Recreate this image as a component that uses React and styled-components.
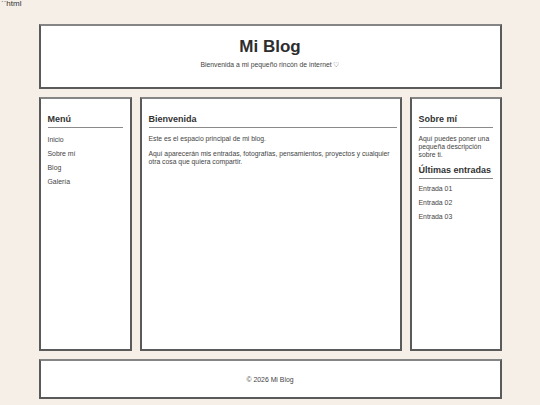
import React from 'react'
import styled, { createGlobalStyle } from 'styled-components'

const GlobalStyle = createGlobalStyle`
  html, body {
    margin: 0;
    padding: 0;
    background: #f5efe8;
    font-family: "Liberation Sans", Arial, sans-serif;
    color: #333;
    -webkit-font-smoothing: antialiased;
  }
`

const Stray = styled.div`
  font-size: 8px;
  line-height: 10px;
  height: 10px;
  color: #333;
  padding-left: 1px;
  margin-top: -1px;
`

const Page = styled.div`
  width: 463px;
  margin: 15px auto 0;
  display: flex;
  flex-direction: column;
  gap: 8px;
`

const Box = styled.div`
  background: #fff;
  border: 2px solid #5a5a5a;
  border-top-color: #858585;
  box-sizing: border-box;
`

const Header = styled(Box)`
  height: 65px;
  display: flex;
  flex-direction: column;
  align-items: center;
  padding-top: 10px;
`

const Title = styled.h1`
  margin: 0;
  font-size: 17px;
  line-height: 22px;
  font-weight: bold;
  color: #2e2e2e;
`

const Tagline = styled.p`
  margin: 2px 0 0;
  font-size: 6.8px;
  line-height: 9px;
  color: #444;
`

const Main = styled.div`
  display: grid;
  grid-template-columns: 93px 1fr 92px;
  gap: 8px;
  height: 254px;
`

const Card = styled(Box)`
  padding: 7px ${p => p.$padRight || 7}px 7px 7px;
`

const Heading = styled.h3`
  margin: ${p => p.$top ?? 7.5}px 0 0;
  padding-bottom: 2.5px;
  border-bottom: 1px solid #8a8a8a;
  font-size: 9px;
  line-height: 11px;
  font-weight: bold;
  color: #333;
`

const List = styled.ul`
  list-style: none;
  margin: ${p => p.$top ?? 7}px 0 0;
  padding: 0;
`

const Item = styled.li`
  font-size: 6.9px;
  line-height: 10px;
  margin-bottom: 4px;
  color: #444;
`

const Text = styled.p`
  margin: ${p => p.$top || 0}px 0 7px;
  font-size: 6.8px;
  line-height: 8px;
  color: #444;
`

const Footer = styled(Box)`
  height: 40px;
  display: flex;
  align-items: center;
  justify-content: center;
  font-size: 6.9px;
  color: #444;
`

export default function App() {
  return (
    <>
      <GlobalStyle />
      <Stray>``html</Stray>
      <Page>
        <Header>
          <Title>Mi Blog</Title>
          <Tagline>Bienvenida a mi pequeño rincón de internet ♡</Tagline>
        </Header>
        <Main>
          <Card>
            <Heading>Menú</Heading>
            <List>
              <Item>Inicio</Item>
              <Item>Sobre mí</Item>
              <Item>Blog</Item>
              <Item>Galería</Item>
            </List>
          </Card>
          <Card $padRight={3}>
            <Heading>Bienvenida</Heading>
            <Text $top={6.5}>Este es el espacio principal de mi blog.</Text>
            <Text>
              Aquí aparecerán mis entradas, fotografías, pensamientos, proyectos y cualquier otra cosa que quiera compartir.
            </Text>
          </Card>
          <Card>
            <Heading>Sobre mí</Heading>
            <Text $top={6.5}>Aquí puedes poner una pequeña descripción sobre ti.</Text>
            <Heading $top={-1}>Últimas entradas</Heading>
            <List $top={5}>
              <Item>Entrada 01</Item>
              <Item>Entrada 02</Item>
              <Item>Entrada 03</Item>
            </List>
          </Card>
        </Main>
        <Footer>© 2026 Mi Blog</Footer>
      </Page>
    </>
  )
}
